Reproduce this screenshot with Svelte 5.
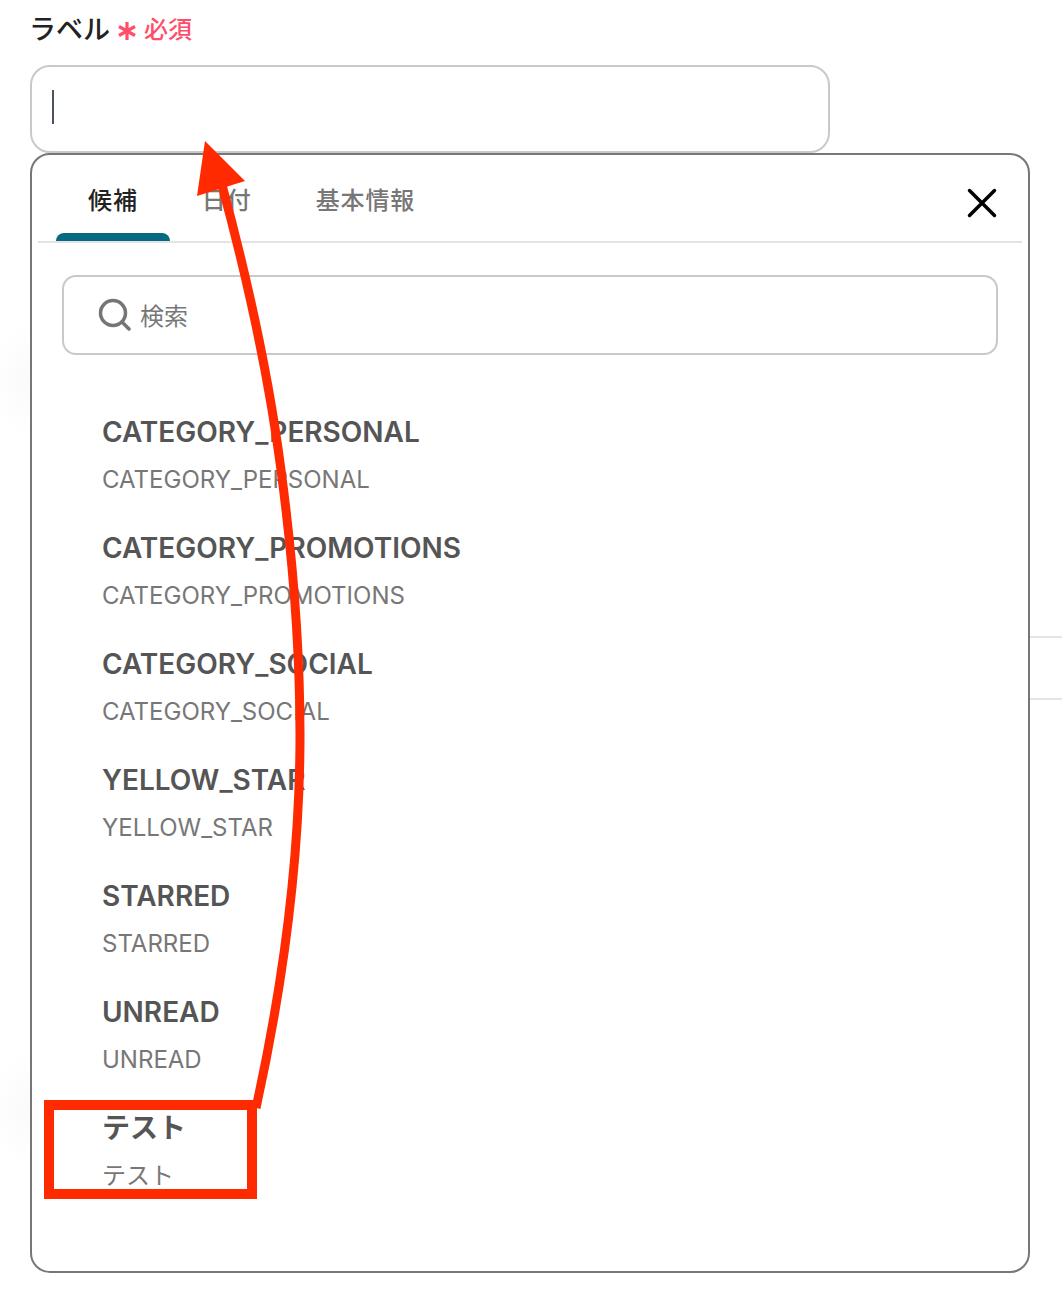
<script>
    const tabs = [
        { name: "候補", active: true },
        { name: "日付", active: false },
        { name: "基本情報", active: false },
    ];
    const options = [
        "CATEGORY_PERSONAL",
        "CATEGORY_PROMOTIONS",
        "CATEGORY_SOCIAL",
        "YELLOW_STAR",
        "STARRED",
        "UNREAD",
        "テスト",
    ];
</script>

<div class="page">
    <div class="glow top"></div>
    <div class="glow bottom"></div>
    <div class="side-lines">
        <span></span>
        <span></span>
    </div>

    <div class="label-row">
        <span class="label">ラベル</span>
        <svg class="star" width="18" height="18" viewBox="0 0 18 18">
            <path d="M9 0 V18 M1 4.5 L17 13.5 M17 4.5 L1 13.5" stroke="#ff4d6a" stroke-width="3.2" fill="none" />
        </svg>
        <span class="required">必須</span>
    </div>

    <div class="input"><span class="caret"></span></div>

    <section class="panel">
        <header class="tabs">
            {#each tabs as tab}
                <div class="tab" class:active={tab.active}>{tab.name}</div>
            {/each}
            <button class="close" aria-label="閉じる">
                <svg width="30" height="30" viewBox="0 0 30 30">
                    <path d="M2.5 2.5 L27.5 27.5 M27.5 2.5 L2.5 27.5" stroke="#000" stroke-width="3.5" stroke-linecap="round" fill="none" />
                </svg>
            </button>
        </header>

        <div class="search">
            <svg width="34" height="34" viewBox="0 0 34 34">
                <circle cx="15" cy="16" r="12.5" stroke="#757575" stroke-width="3.5" fill="none" />
                <path d="M24 25 L31 32" stroke="#757575" stroke-width="3.5" stroke-linecap="round" />
            </svg>
            <span>検索</span>
        </div>

        <ul class="options">
            {#each options as option}
                <li>
                    <div class="title">{option}</div>
                    <div class="sub">{option}</div>
                </li>
            {/each}
        </ul>
    </section>

    <!-- 赤い注釈は画面の上に重ねる -->
    <div class="mark-box"></div>
    <svg class="arrow" width="1062" height="1290" viewBox="0 0 1062 1290">
        <path d="M222 185 C245 270 268 370 281 470 C293 560 300 650 300 735 C300 860 283 985 256 1108" stroke="#ff2a00" stroke-width="9" fill="none" />
        <path d="M205 141 L245 181 L197 196 Z" fill="#ff2a00" />
    </svg>
</div>

<style>
    :global(body) {
        margin: 0;
        background: #fff;
    }

    .page {
        position: relative;
        width: 1062px;
        height: 1290px;
        overflow: hidden;
        padding: 0 32px 0 30px;
        box-sizing: border-box;
        font-family: Inter, "Noto Sans CJK JP", sans-serif;
    }

    /* パネルの裏にうっすら見える背景の影 */
    .glow {
        position: absolute;
        left: -10px;
        width: 80px;
        height: 120px;
        background: radial-gradient(closest-side, #fafafa, #fff);
    }

    .glow.top {
        top: 320px;
    }

    .glow.bottom {
        top: 1050px;
    }

    .label-row {
        position: relative;
        display: flex;
        align-items: center;
        height: 65px;
        padding-bottom: 10px;
        box-sizing: border-box;
    }

    .label {
        font-size: 27px;
        font-weight: 500;
        color: #222;
        margin-left: -1px;
    }

    .star {
        margin: 7px 8px 0 8px;
    }

    .required {
        font-size: 24px;
        font-weight: 500;
        color: #ff4d6a;
    }

    .input {
        position: relative;
        width: 800px;
        height: 88px;
        box-sizing: border-box;
        border: 2px solid #c9c9c9;
        border-radius: 20px;
        padding: 23px 20px;
    }

    .caret {
        display: block;
        width: 2px;
        height: 34px;
        background: #4a5260;
    }

    .panel {
        position: relative;
        width: 1000px;
        height: 1120px;
        box-sizing: border-box;
        border: 2px solid #777;
        border-radius: 20px;
        background: #fff;
        padding: 0 6px;
    }

    .tabs {
        display: flex;
        align-items: center;
        height: 88px;
        box-sizing: border-box;
        border-bottom: 2px solid #e4e4e4;
        padding-left: 18px;
    }

    .tab {
        position: relative;
        padding: 0 32px;
        height: 100%;
        line-height: 92px;
        font-size: 24px;
        font-weight: 500;
        letter-spacing: 0.9px;
        color: #777;
        white-space: nowrap;
    }

    .tab.active {
        color: #222;
    }

    .tab.active::after {
        content: "";
        position: absolute;
        left: 0;
        right: 0;
        bottom: 0;
        height: 8px;
        background: #066a80;
        border-radius: 8px 8px 0 0;
    }

    .close {
        margin-left: auto;
        margin-right: 25px;
        margin-top: 10px;
        padding: 0;
        border: 0;
        background: none;
        display: flex;
    }

    .search {
        display: flex;
        align-items: center;
        gap: 8px;
        height: 80px;
        box-sizing: border-box;
        margin: 32px 24px 0;
        padding: 0 0 2px 34px;
        border: 2px solid #c9c9c9;
        border-radius: 14px;
        color: #777;
        font-size: 24px;
    }

    .options {
        list-style: none;
        margin: 57px 0 0;
        padding: 0 0 0 64px;
    }

    .options li {
        height: 116px;
    }

    .title {
        font-size: 28px;
        font-weight: 600;
        line-height: 40px;
        color: #555;
    }

    .sub {
        margin-top: 11px;
        font-size: 24px;
        line-height: 34px;
        color: #777;
    }

    .side-lines span {
        position: absolute;
        left: 1030px;
        right: 0;
        height: 2px;
        background: #e4e4e4;
        top: 636px;
    }

    .side-lines span + span {
        top: 698px;
    }

    .mark-box {
        position: absolute;
        left: 44px;
        top: 1100px;
        width: 213px;
        height: 99px;
        box-sizing: border-box;
        border: 10px solid #ff2a00;
    }

    .arrow {
        position: absolute;
        left: 0;
        top: 0;
        pointer-events: none;
    }
</style>
